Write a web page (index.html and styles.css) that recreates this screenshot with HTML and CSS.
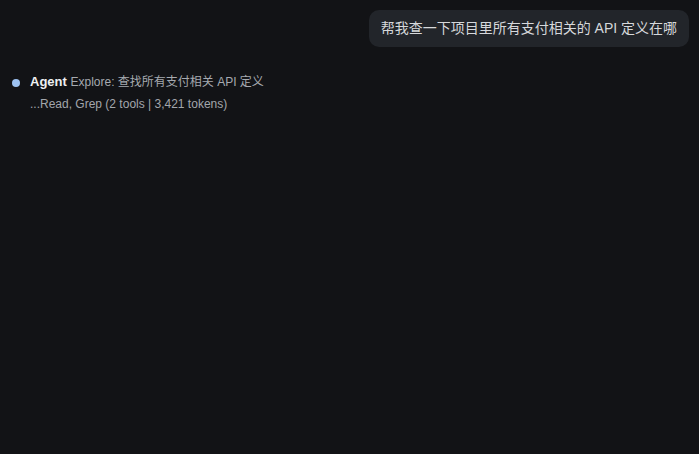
FILE: index.html
```html
<!DOCTYPE html>
<html lang="zh">
<head>
<meta charset="utf-8">
<link rel="stylesheet" href="styles.css">
</head>
<body>
<div class="chat">
  <div class="user-row">
    <div class="bubble">帮我查一下项目里所有支付相关的 API 定义在哪</div>
  </div>
  <div class="agent">
    <span class="dot"></span>
    <div class="agent-body">
      <div class="agent-title"><b>Agent</b> <span class="desc">Explore: 查找所有支付相关 API 定义</span></div>
      <div class="agent-sub">...Read, Grep (2 tools | 3,421 tokens)</div>
    </div>
  </div>
</div>
</body>
</html>
```

FILE: styles.css
```css
html, body {
  margin: 0;
  padding: 0;
  background: #121316;
  height: 100%;
}
body {
  font-family: "Liberation Sans", Arial, "Noto Sans CJK SC", sans-serif;
  color: #d4d6d9;
}
.chat {
  display: flex;
  flex-direction: column;
  padding: 10px 10px 0 12px;
}
.user-row {
  display: flex;
  justify-content: flex-end;
}
.bubble {
  background: #22252a;
  border-radius: 10px;
  padding: 9px 12px 10px 12px;
  font-size: 14px;
  line-height: 18px;
  color: #d6d8db;
}
.agent {
  display: flex;
  align-items: flex-start;
  gap: 10px;
  margin-top: 26px;
}
.dot {
  width: 8px;
  height: 8px;
  border-radius: 50%;
  background: #9dc2f2;
  margin-top: 6px;
  flex: none;
}
.agent-body {
  display: flex;
  flex-direction: column;
  gap: 5px;
}
.agent-title {
  font-size: 13px;
  line-height: 18px;
  color: #a6aab0;
}
.agent-title b {
  color: #eef0f2;
  font-weight: 700;
}
.desc {
  font-size: 12px;
}
.agent-sub {
  font-size: 12px;
  line-height: 16px;
  color: #a2a6ac;
}
```
